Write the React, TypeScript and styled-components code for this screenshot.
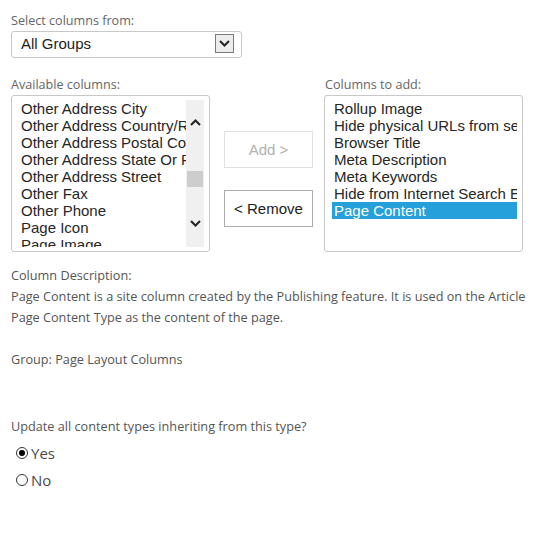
import styled, { createGlobalStyle } from 'styled-components';

const GlobalStyle = createGlobalStyle`
  html, body {
    margin: 0;
    padding: 0;
    background: #ffffff;
  }
  body {
    font-family: 'Open Sans', 'Noto Sans', sans-serif;
  }
`;

const Page = styled.div`
  width: 536px;
  height: 549px;
  box-sizing: border-box;
  padding: 12px 11px 0;
  display: flex;
  flex-direction: column;
`;

const FieldLabel = styled.div`
  font-size: 12.6px;
  line-height: 18px;
  color: #666666;
  white-space: nowrap;
`;

const SelectBox = styled.div`
  margin-top: 1px;
  width: 231px;
  height: 27px;
  box-sizing: border-box;
  border: 1px solid #c8c8c8;
  border-radius: 3px;
  display: flex;
  align-items: center;
  justify-content: space-between;
  padding: 0 7px 2px 9px;
  font-family: 'Liberation Sans', Arial, sans-serif;
  font-size: 15px;
  color: #222222;
`;

const DropButton = styled.span`
  width: 19px;
  height: 19px;
  box-sizing: border-box;
  border: 1px solid #7a7a7a;
  background: #ececec;
  display: flex;
  align-items: center;
  justify-content: center;
`;

const ColumnsRow = styled.div`
  margin-top: 18px;
  display: flex;
`;

const ListColumn = styled.div`
  width: 199px;
  display: flex;
  flex-direction: column;
`;

const ListBox = styled.div`
  margin-top: 1px;
  height: 157px;
  box-sizing: border-box;
  border: 1px solid #c8c8c8;
  border-radius: 3px;
  padding: 4px 5px 4px 7px;
  display: flex;
  overflow: hidden;
`;

const Items = styled.div`
  flex: 1;
  min-width: 0;
  overflow: hidden;
`;

const Item = styled.div<{ $selected?: boolean }>`
  padding: 0 2px;
  height: 17px;
  line-height: 17px;
  font-family: 'Liberation Sans', Arial, sans-serif;
  font-size: 15px;
  white-space: nowrap;
  overflow: hidden;
  color: ${p => (p.$selected ? '#ffffff' : '#262626')};
  background: ${p => (p.$selected ? '#26a0da' : 'transparent')};
`;

const ScrollTrack = styled.div`
  width: 18px;
  flex: none;
  background: #f0f0f0;
  display: flex;
  flex-direction: column;
  align-items: center;
`;

const ScrollThumb = styled.div`
  margin-top: 45px;
  width: 16px;
  height: 16px;
  background: #cdcdcd;
`;

const ArrowSlot = styled.div<{ $top: number }>`
  margin-top: ${p => p.$top}px;
`;

const ButtonColumn = styled.div`
  width: 89px;
  margin: 55px 11px 0 14px;
  display: flex;
  flex-direction: column;
  gap: 22px;
`;

const MoveButton = styled.div<{ $disabled?: boolean }>`
  height: 37px;
  box-sizing: border-box;
  border: 1px solid ${p => (p.$disabled ? '#e1e1e1' : '#ababab')};
  background: #ffffff;
  display: flex;
  align-items: center;
  justify-content: center;
  font-family: 'Liberation Sans', Arial, sans-serif;
  font-size: 15px;
  color: ${p => (p.$disabled ? '#b1b1b1' : '#222222')};
`;

const Description = styled.div`
  margin-top: 13px;
  font-size: 12.7px;
  line-height: 21px;
  color: #555555;
`;

const Line = styled.div`
  min-height: 21px;
  white-space: nowrap;
`;

const Question = styled.div`
  margin-top: 46px;
  font-size: 12.7px;
  line-height: 21px;
  color: #555555;
`;

const RadioGroup = styled.div`
  margin-top: 2px;
  display: flex;
  flex-direction: column;
`;

const RadioRow = styled.label`
  height: 27px;
  display: flex;
  align-items: center;
  gap: 3px;
  padding-left: 5px;
  font-size: 15px;
  color: #4a4a4a;
`;

const RadioCircle = styled.span<{ $checked?: boolean }>`
  width: 12px;
  height: 12px;
  box-sizing: border-box;
  border: 1px solid #333333;
  border-radius: 50%;
  display: flex;
  align-items: center;
  justify-content: center;
  &::after {
    content: '';
    width: 6px;
    height: 6px;
    border-radius: 50%;
    background: ${p => (p.$checked ? '#000000' : 'transparent')};
  }
`;

const Chevron = ({ up = false }: { up?: boolean }) => (
  <svg width="11" height="7" viewBox="0 0 11 7" style={{ display: 'block' }}>
    <path
      d={up ? 'M1 6 L5.5 1.5 L10 6' : 'M1 1 L5.5 5.5 L10 1'}
      fill="none"
      stroke="#222"
      strokeWidth="2"
    />
  </svg>
);

const available = [
  'Other Address City',
  'Other Address Country/Region',
  'Other Address Postal Code',
  'Other Address State Or Province',
  'Other Address Street',
  'Other Fax',
  'Other Phone',
  'Page Icon',
  'Page Image',
];

const toAdd = [
  'Rollup Image',
  'Hide physical URLs from search',
  'Browser Title',
  'Meta Description',
  'Meta Keywords',
  'Hide from Internet Search Engines',
  'Page Content',
];

export default function App() {
  return (
    <>
      <GlobalStyle />
      <Page>
        <FieldLabel>Select columns from:</FieldLabel>
        <SelectBox>
          <span>All Groups</span>
          <DropButton>
            <Chevron />
          </DropButton>
        </SelectBox>

        <ColumnsRow>
          <ListColumn>
            <FieldLabel>Available columns:</FieldLabel>
            <ListBox>
              <Items>
                {available.map(name => (
                  <Item key={name}>{name}</Item>
                ))}
              </Items>
              <ScrollTrack>
                <ArrowSlot $top={19}>
                  <Chevron up />
                </ArrowSlot>
                <ScrollThumb />
                <ArrowSlot $top={33}>
                  <Chevron />
                </ArrowSlot>
              </ScrollTrack>
            </ListBox>
          </ListColumn>

          <ButtonColumn>
            <MoveButton $disabled>Add &gt;</MoveButton>
            <MoveButton>&lt; Remove</MoveButton>
          </ButtonColumn>

          <ListColumn>
            <FieldLabel style={{ paddingLeft: 1 }}>Columns to add:</FieldLabel>
            <ListBox>
              <Items>
                {toAdd.map(name => (
                  <Item key={name} $selected={name === 'Page Content'}>
                    {name}
                  </Item>
                ))}
              </Items>
            </ListBox>
          </ListColumn>
        </ColumnsRow>

        <Description>
          <Line>Column Description:</Line>
          <Line>
            Page Content is a site column created by the Publishing feature. It is used on the Article
          </Line>
          <Line>Page Content Type as the content of the page.</Line>
          <Line />
          <Line>Group: Page Layout Columns</Line>
        </Description>

        <Question>Update all content types inheriting from this type?</Question>
        <RadioGroup>
          <RadioRow>
            <RadioCircle $checked />
            Yes
          </RadioRow>
          <RadioRow>
            <RadioCircle />
            No
          </RadioRow>
        </RadioGroup>
      </Page>
    </>
  );
}
